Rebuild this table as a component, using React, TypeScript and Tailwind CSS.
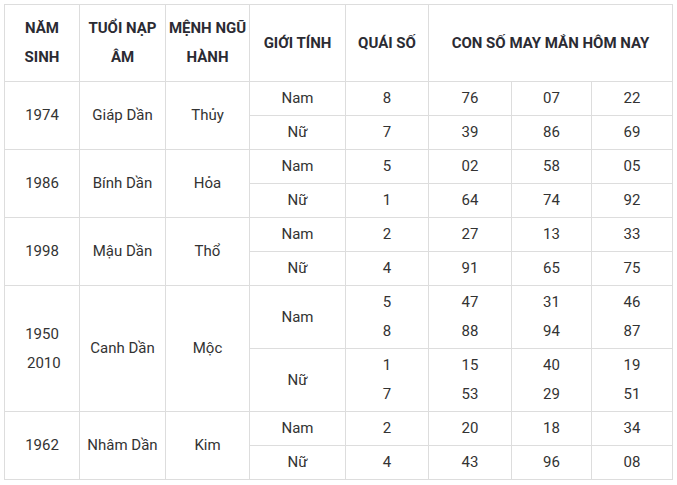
import React from "react";

type Row = {
  year: string[];
  tuoi: string;
  menh: string;
  sub: { gender: string; quai: string[]; nums: string[][] }[];
};

const rows: Row[] = [
  {
    year: ["1974"],
    tuoi: "Giáp Dần",
    menh: "Thủy",
    sub: [
      { gender: "Nam", quai: ["8"], nums: [["76"], ["07"], ["22"]] },
      { gender: "Nữ", quai: ["7"], nums: [["39"], ["86"], ["69"]] },
    ],
  },
  {
    year: ["1986"],
    tuoi: "Bính Dần",
    menh: "Hỏa",
    sub: [
      { gender: "Nam", quai: ["5"], nums: [["02"], ["58"], ["05"]] },
      { gender: "Nữ", quai: ["1"], nums: [["64"], ["74"], ["92"]] },
    ],
  },
  {
    year: ["1998"],
    tuoi: "Mậu Dần",
    menh: "Thổ",
    sub: [
      { gender: "Nam", quai: ["2"], nums: [["27"], ["13"], ["33"]] },
      { gender: "Nữ", quai: ["4"], nums: [["91"], ["65"], ["75"]] },
    ],
  },
  {
    year: ["1950", "\u00a02010"],
    tuoi: "Canh Dần",
    menh: "Mộc",
    sub: [
      { gender: "Nam", quai: ["5", "8"], nums: [["47", "88"], ["31", "94"], ["46", "87"]] },
      { gender: "Nữ", quai: ["1", "7"], nums: [["15", "53"], ["40", "29"], ["19", "51"]] },
    ],
  },
  {
    year: ["1962"],
    tuoi: "Nhâm Dần",
    menh: "Kim",
    sub: [
      { gender: "Nam", quai: ["2"], nums: [["20"], ["18"], ["34"]] },
      { gender: "Nữ", quai: ["4"], nums: [["43"], ["96"], ["08"]] },
    ],
  },
];

const td = "border border-[#dddddd] text-center align-middle p-0 leading-[29px]";

function Lines({ items }: { items: string[] }) {
  return (
    <>
      {items.map((t, i) => (
        <div key={i}>{t}</div>
      ))}
    </>
  );
}

export default function App() {
  return (
    <div className="min-h-screen bg-white pl-[4px] pt-[4px] font-['Roboto',sans-serif] text-[15px] text-[#333333]">
      <table className="border-collapse table-fixed w-[668px]">
        <colgroup>
          <col className="w-[75px]" />
          <col className="w-[86px]" />
          <col className="w-[84px]" />
          <col className="w-[96px]" />
          <col className="w-[83px]" />
          <col className="w-[83px]" />
          <col className="w-[80px]" />
          <col className="w-[81px]" />
        </colgroup>
        <thead>
          <tr className="h-[77px] font-bold text-[#2b2b33]">
            <th className={td}>
              NĂM
              <br />
              SINH
            </th>
            <th className={td}>
              TUỔI NẠP
              <br />
              ÂM
            </th>
            <th className={td}>
              MỆNH NGŨ
              <br />
              HÀNH
            </th>
            <th className={td}>GIỚI TÍNH</th>
            <th className={td}>QUÁI SỐ</th>
            <th className={td} colSpan={3}>
              CON SỐ MAY MẮN HÔM NAY
            </th>
          </tr>
        </thead>
        <tbody>
          {rows.map((r) =>
            r.sub.map((s, i) => {
              const h = s.quai.length > 1 ? "h-[63px]" : "h-[34px]";
              return (
                <tr key={r.tuoi + s.gender} className={h}>
                  {i === 0 && (
                    <>
                      <td className={td} rowSpan={2}>
                        <Lines items={r.year} />
                      </td>
                      <td className={td} rowSpan={2}>
                        {r.tuoi}
                      </td>
                      <td className={td} rowSpan={2}>
                        {r.menh}
                      </td>
                    </>
                  )}
                  <td className={td}>{s.gender}</td>
                  <td className={td}>
                    <Lines items={s.quai} />
                  </td>
                  {s.nums.map((n, j) => (
                    <td key={j} className={td}>
                      <Lines items={n} />
                    </td>
                  ))}
                </tr>
              );
            })
          )}
        </tbody>
      </table>
    </div>
  );
}
